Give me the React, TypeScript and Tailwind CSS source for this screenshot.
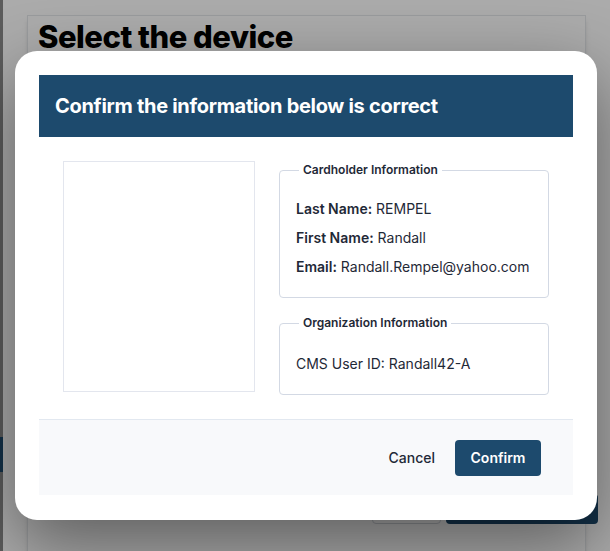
import React from "react";

export default function App() {
  const font = { fontFamily: "Inter, 'Noto Sans', sans-serif" };
  return (
    <div className="relative h-[551px] w-[610px] overflow-hidden bg-white" style={font}>
      {/* page behind */}
      <div className="flex h-full">
        <div className="flex w-[3px] flex-col bg-[#8a8a8a]">
          <div className="mt-[437px] h-[35px] bg-[#1d4a6d]" />
        </div>
        <div className="flex-1 pl-[24px] pr-[24px] pt-[15px]">
          <div className="flex h-[560px] flex-col border border-gray-200 bg-white px-[10px] pt-[2px] shadow-md">
            <h1 className="text-[31px] font-extrabold leading-[38px] tracking-[-0.5px] text-black">Select the device</h1>
            <div className="-mr-[23px] mb-[50px] mt-auto flex justify-end gap-[5px]">
              <div className="h-[30px] w-[69px] rounded border border-gray-300 bg-white" />
              <div className="h-[30px] w-[152px] rounded bg-[#1d4a6d]" />
            </div>
          </div>
        </div>
      </div>

      {/* overlay */}
      <div className="absolute inset-0 bg-black/[0.33]">
        <div className="ml-[15px] mt-[51px] w-[582px] rounded-[22px] bg-white px-[24px] pb-[25px] pt-[24px] shadow-[0_25px_70px_rgba(0,0,0,0.45)]">
          <div className="flex h-[62px] items-center bg-[#1d4a6d] px-[16px]">
            <h2 className="text-[20px] font-bold tracking-[-0.3px] text-white">Confirm the information below is correct</h2>
          </div>
          <div className="flex gap-[24px] px-[24px] pb-[24px] pt-[24px]">
            <div className="h-[231px] w-[192px] border border-[#e3e6ee]" />
            <div className="flex w-[270px] flex-col gap-[16px]">
              <fieldset className="rounded border border-[#d3d9e4] px-[16px] pb-[20px] pt-[19px]">
                <legend className="ml-[3px] px-[4px] text-[12px] font-semibold text-[#1f2937]">Cardholder Information</legend>
                <div className="flex flex-col gap-[8px] text-[14px] leading-[21px] text-[#1f2937]">
                  <div><span className="font-semibold">Last Name:</span> REMPEL</div>
                  <div><span className="font-semibold">First Name:</span> Randall</div>
                  <div><span className="font-semibold">Email:</span> Randall.Rempel@yahoo.com</div>
                </div>
              </fieldset>
              <fieldset className="rounded border border-[#d3d9e4] px-[16px] pb-[20px] pt-[21px]">
                <legend className="ml-[3px] px-[4px] text-[12px] font-semibold text-[#1f2937]">Organization Information</legend>
                <div className="text-[14px] leading-[21px] text-[#1f2937]">CMS User ID: Randall42-A</div>
              </fieldset>
            </div>
          </div>
          <div className="flex h-[76px] items-center justify-end gap-[20px] border-t border-[#e2e8f0] bg-[#f8f9fb] pr-[32px]">
            <button className="text-[14px] font-medium text-[#1f2937]">Cancel</button>
            <button className="h-[36px] w-[86px] rounded bg-[#1d4a6d] text-[14px] font-semibold text-white">Confirm</button>
          </div>
        </div>
      </div>
    </div>
  );
}
